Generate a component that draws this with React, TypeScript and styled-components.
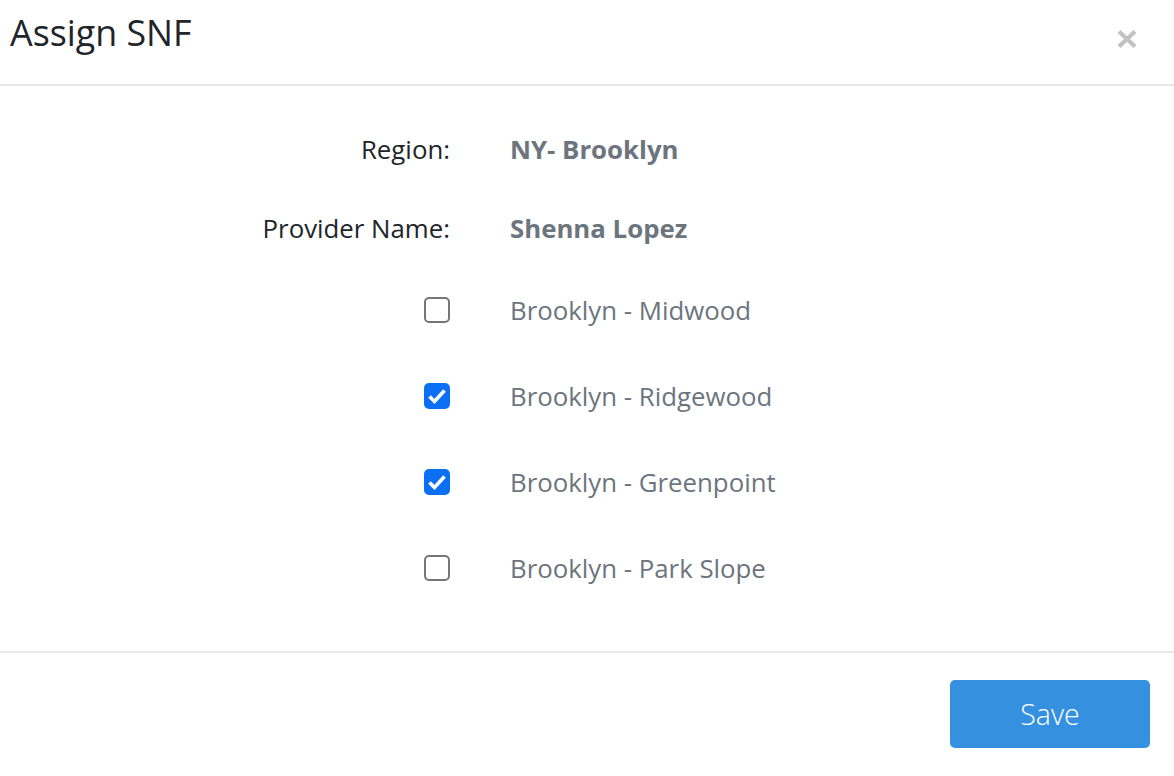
import styled, { createGlobalStyle } from "styled-components";

const GlobalStyle = createGlobalStyle`
  html, body {
    margin: 0;
    padding: 0;
    background: #fff;
  }
  body {
    font-family: "Open Sans", "Liberation Sans", sans-serif;
    color: #212529;
  }
`;

const Modal = styled.div`
  width: 1174px;
  height: 776px;
  background: #fff;
  display: flex;
  flex-direction: column;
`;

const Header = styled.div`
  height: 86px;
  box-sizing: border-box;
  display: flex;
  justify-content: space-between;
  align-items: flex-start;
  padding: 10px 37px 0 10px;
  border-bottom: 2px solid #e6e8eb;
  flex-shrink: 0;
`;

const Title = styled.h1`
  margin: 0;
  font-size: 35.8px;
  font-weight: 400;
  line-height: 44px;
  color: #212529;
`;

const CloseButton = styled.button`
  border: 0;
  background: none;
  padding: 0;
  margin-top: 20px;
  width: 20px;
  height: 18px;
  cursor: pointer;
  display: flex;
`;

const Body = styled.div`
  display: grid;
  grid-template-columns: 450px 1fr;
  column-gap: 60px;
  padding: 23px 0 40px;
  border-bottom: 2px solid #e6e8eb;
`;

const Row = styled.div<{ $height: number }>`
  display: contents;
  & > * {
    height: ${(p) => p.$height}px;
  }
`;

const Label = styled.div`
  display: flex;
  align-items: center;
  justify-content: flex-end;
  font-size: 25.8px;
  color: #212529;
`;

const Value = styled.div<{ $bold?: boolean }>`
  display: flex;
  align-items: center;
  font-size: 25.8px;
  font-weight: ${(p) => (p.$bold ? 700 : 400)};
  color: #6c757d;
`;

const Check = styled.span<{ $checked?: boolean }>`
  width: 26px;
  height: 26px;
  box-sizing: border-box;
  border-radius: 5px;
  display: flex;
  align-items: center;
  justify-content: center;
  background: ${(p) => (p.$checked ? "#0b6ff4" : "#fff")};
  border: ${(p) => (p.$checked ? "none" : "2px solid #767676")};
`;

const Footer = styled.div`
  display: flex;
  justify-content: flex-end;
  padding: 27px 24px 0;
`;

const SaveButton = styled.button`
  width: 200px;
  height: 68px;
  border: 0;
  border-radius: 5px;
  background: #3590e0;
  color: #fff;
  font-family: "Open Sans", "Liberation Sans", sans-serif;
  font-size: 28.5px;
  font-weight: 300;
  cursor: pointer;
`;

const options = [
  { name: "Brooklyn - Midwood", checked: false },
  { name: "Brooklyn - Ridgewood", checked: true },
  { name: "Brooklyn - Greenpoint", checked: true },
  { name: "Brooklyn - Park Slope", checked: false },
];

function CheckBox({ checked }: { checked: boolean }) {
  return (
    <Check $checked={checked}>
      {checked && (
        <svg width="26" height="26" viewBox="0 0 26 26">
          <path
            d="M5.5 13.5 L10.5 18.5 L20.5 7.5"
            fill="none"
            stroke="#fff"
            strokeWidth="3.6"
          />
        </svg>
      )}
    </Check>
  );
}

export default function App() {
  return (
    <>
      <GlobalStyle />
      <Modal>
        <Header>
          <Title>Assign SNF</Title>
          <CloseButton aria-label="Close">
            <svg width="20" height="18" viewBox="0 0 20 18">
              <path
                d="M2 1.5 L18 16.5 M18 1.5 L2 16.5"
                stroke="#c2c2c2"
                strokeWidth="4.2"
              />
            </svg>
          </CloseButton>
        </Header>
        <Body>
          <Row $height={79}>
            <Label>Region:</Label>
            <Value $bold>NY- Brooklyn</Value>
          </Row>
          <Row $height={79}>
            <Label>Provider Name:</Label>
            <Value $bold>Shenna Lopez</Value>
          </Row>
          {options.map((o) => (
            <Row $height={86} key={o.name}>
              <Label>
                <CheckBox checked={o.checked} />
              </Label>
              <Value>{o.name}</Value>
            </Row>
          ))}
        </Body>
        <Footer>
          <SaveButton>Save</SaveButton>
        </Footer>
      </Modal>
    </>
  );
}
